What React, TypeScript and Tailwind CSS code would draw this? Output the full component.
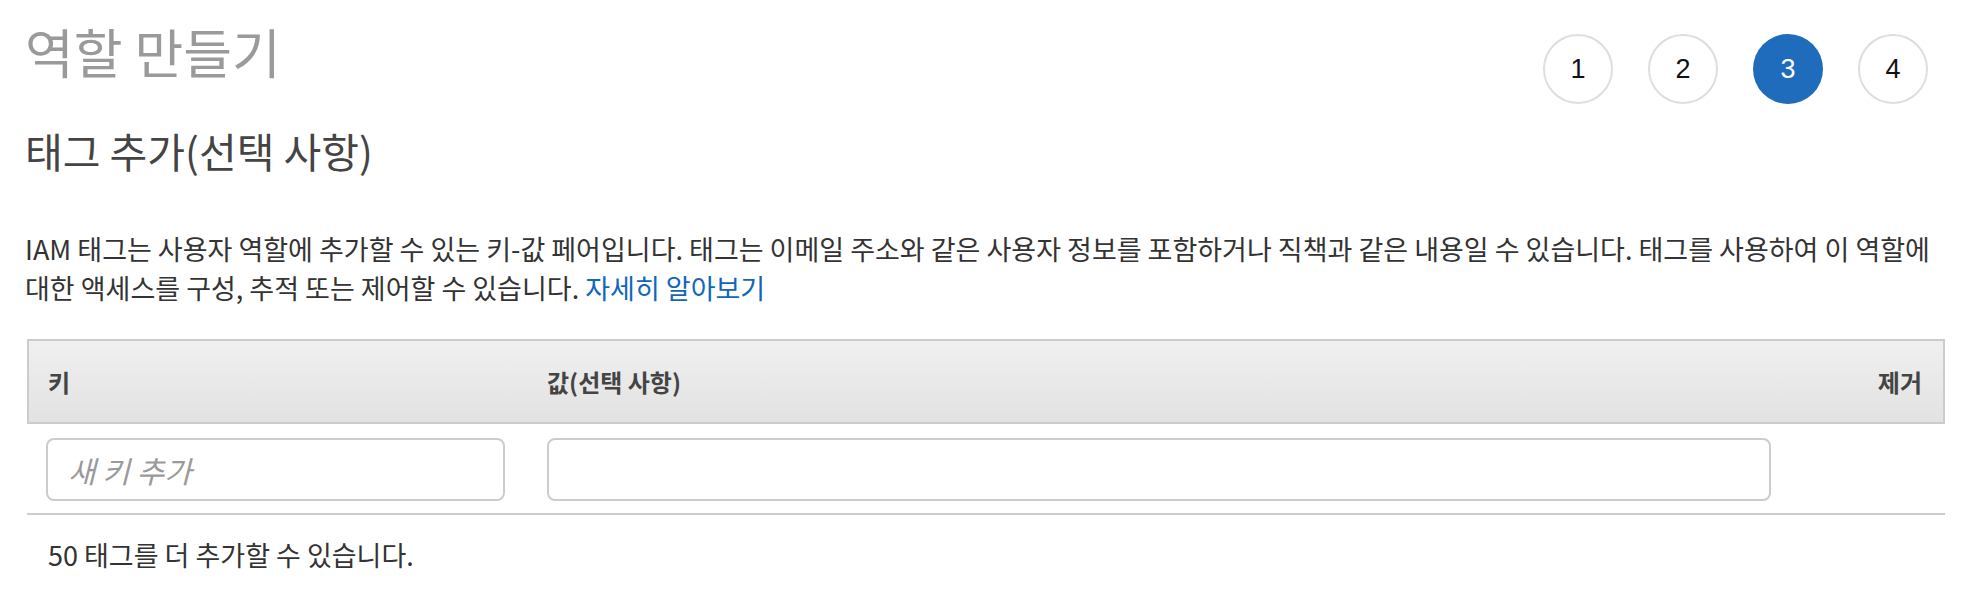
const steps = [1, 2, 3, 4];
const activeStep = 3;

function StepIndicator() {
  return (
    <div className="mr-[17px] mt-[34px] flex gap-[35px]">
      {steps.map((step) => (
        <div
          key={step}
          className={
            step === activeStep
              ? "grid h-[70px] w-[70px] place-items-center rounded-full bg-[#1f6bbc] font-['Liberation_Sans',sans-serif] text-[27px] text-white"
              : "grid h-[70px] w-[70px] place-items-center rounded-full border-2 border-[#dedede] bg-white font-['Liberation_Sans',sans-serif] text-[27px] text-[#111]"
          }
        >
          {step}
        </div>
      ))}
    </div>
  );
}

function TagTable() {
  return (
    <div className="ml-[2px] mt-[32px]">
      {/* header */}
      <div className="grid h-[85px] grid-cols-[498px_1268px_1fr] items-center border-2 border-[#cccccc] bg-gradient-to-b from-[#f0f0f0] to-[#e2e2e2] text-[24px] font-bold text-[#444]">
        <div className="pl-[19px]">키</div>
        <div className="pl-[20px]">값(선택 사항)</div>
        <div className="pr-[21px] text-right">제거</div>
      </div>

      {/* row */}
      <div className="grid grid-cols-[498px_1268px_1fr] border-b-2 border-[#cccccc] pb-[12px] pt-[14px]">
        <div className="pl-[19px]">
          <input
            type="text"
            placeholder="새 키 추가"
            className="h-[63px] w-[459px] rounded-[8px] border-2 border-[#cccccc] bg-white px-[20px] text-[30px] text-[#333] outline-none placeholder:italic placeholder:text-[#9a9a9a]"
          />
        </div>
        <div className="pl-[22px] pr-[22px]">
          <input
            type="text"
            className="h-[63px] w-full rounded-[8px] border-2 border-[#cccccc] bg-white px-[20px] text-[30px] text-[#333] outline-none"
          />
        </div>
        <div />
      </div>
    </div>
  );
}

export default function App() {
  return (
    <div className="h-[600px] w-[1970px] overflow-hidden bg-white px-[25px] font-['Noto_Sans_CJK_KR','Noto_Sans',sans-serif] text-[#333]">
      <div className="flex items-start justify-between">
        <h1 className="mt-[25px] text-[53px] font-normal leading-none text-[#9a9a9a]">
          역할 만들기
        </h1>
        <StepIndicator />
      </div>

      <h2 className="mt-[26px] text-[41px] leading-none text-[#444]">
        태그 추가(선택 사항)
      </h2>

      <p className="mt-[58px] break-keep text-[27px] leading-[39px] text-[#333]">
        IAM 태그는 사용자 역할에 추가할 수 있는 키-값 페어입니다. 태그는 이메일 주소와 같은 사용자 정보를 포함하거나 직책과 같은 내용일 수 있습니다. 태그를 사용하여 이 역할에 대한 액세스를 구성, 추적 또는 제어할 수 있습니다.{" "}
        <a href="#" className="text-[#1166bb]">
          자세히 알아보기
        </a>
      </p>

      <TagTable />

      <p className="ml-[23px] mt-[20px] text-[27px] leading-[39px] text-[#333]">
        50 태그를 더 추가할 수 있습니다.
      </p>
    </div>
  );
}
